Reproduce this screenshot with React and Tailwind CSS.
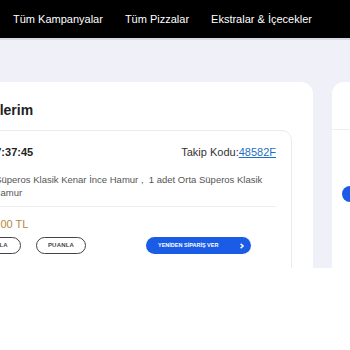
export default function App() {
  const font = { fontFamily: '"Liberation Sans", Arial, sans-serif' };
  return (
    <div className="w-[350px] h-[350px] overflow-hidden bg-white" style={font}>
      <div className="h-[40px] bg-black border-b-2 border-[#d9d9e1] flex items-center gap-[22px] pl-[13px] text-white text-[11px]">
        <span>Tüm Kampanyalar</span>
        <span>Tüm Pizzalar</span>
        <span>Ekstralar &amp; İçecekler</span>
      </div>
      <div className="h-[228px] overflow-hidden bg-[#f0f0f8] pt-[42px]">
        <div className="flex gap-[19px] -ml-[120px] w-[700px]">
          <div className="w-[433px] shrink-0 bg-white rounded-[12px] pt-[19px] pl-[20px] pr-[21px] h-[300px]">
            <div className="text-[14px] font-bold leading-[18px] text-[#222] ml-[53px] whitespace-nowrap">Siparişlerim</div>
            <div className="mt-[11px] border border-[#ebebeb] rounded-[10px] pl-[16px] pr-[15px] pt-[13px] h-[260px]">
              <div className="flex items-center justify-between">
                <span className="text-[11px] font-bold text-[#222] leading-[17px] whitespace-nowrap ml-[14px]">14.03.2024 17:37:45</span>
                <span className="text-[11px] text-[#333] leading-[17px] whitespace-nowrap">
                  Takip Kodu:<span className="text-[#1f6fc5] underline">48582F</span>
                </span>
              </div>
              <div className="mt-[12px] pb-[7px] border-b border-[#eeeeee]">
                <div className="ml-[28px] text-[9.5px] leading-[13px] text-[#555]">
                  1 adet Orta Süperos Klasik Kenar İnce Hamur ,&nbsp; 1 adet Orta Süperos Klasik Kenar İnce Hamur
                </div>
              </div>
              <div className="mt-[9px] text-[11px] leading-[16px] text-[#b3893d] whitespace-nowrap ml-[62px]">290.00 TL</div>
              <div className="mt-[5px] flex items-center">
                <span className="h-[17px] w-[58px] rounded-full border border-[#444] flex items-center justify-center text-[6px] font-bold tracking-[0.2px] text-[#444] ml-[46px] whitespace-nowrap">YORUMLA</span>
                <span className="h-[17px] w-[50px] rounded-full border border-[#444] flex items-center justify-center text-[6px] font-bold tracking-[0.2px] text-[#444] ml-[15px] whitespace-nowrap">PUANLA</span>
                <span className="h-[17px] w-[105px] rounded-full bg-[#1a5ce6] flex items-center justify-between pl-[12px] pr-[6px] text-[5.5px] font-bold text-white ml-[60px] whitespace-nowrap">
                  <span>YENİDEN SİPARİŞ VER</span>
                  <svg width="6" height="6" viewBox="0 0 6 6"><path d="M1.6 0.9 L4.1 3 L1.6 5.1" stroke="white" strokeWidth="1.4" fill="none" /></svg>
                </span>
              </div>
            </div>
          </div>
          <div className="w-[200px] shrink-0 bg-white rounded-[12px] h-[300px]">
            <div className="h-[48px] border-b border-[#eeeeee]"></div>
            <div className="mt-[56px] ml-[10px] h-[16px] w-[100px] rounded-full bg-[#1a5ce6]"></div>
          </div>
        </div>
      </div>
    </div>
  );
}
